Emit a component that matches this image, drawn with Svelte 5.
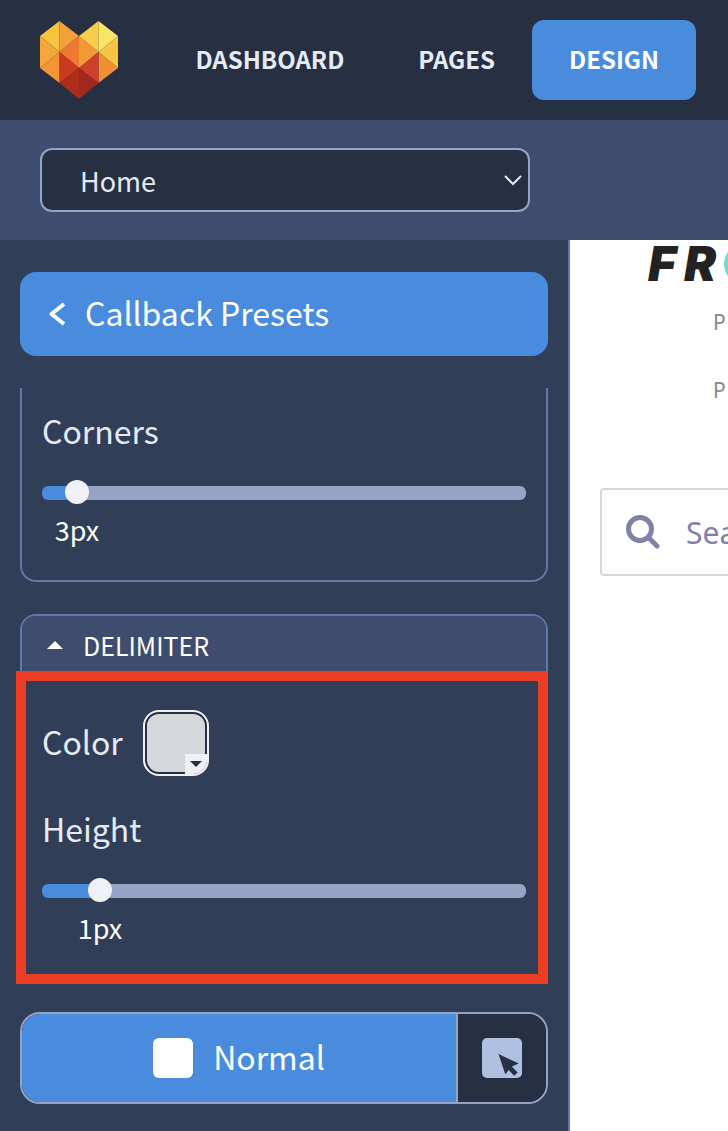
<script>
  let page = $state('Home');
  let color = $state('#d4d8db');
  let corners = $state(3);
  let height = $state(1);
  let mode = $state('normal');
</script>

{#snippet arrowCursor()}
  <svg class="state-icon" viewBox="0 0 40 40" aria-hidden="true">
    <rect width="40" height="40" rx="5" fill="#afc0e0" />
    <path d="M16.5 16 L36.8 25.5 L29.8 28.6 L35.6 34.4 L32.2 37.8 L26.6 32 L23.4 36.4 Z" fill="#272f42" />
  </svg>
{/snippet}

<div class="app">
  <header class="topbar">
    <a class="logo" href="#home" aria-label="Home">
      <svg viewBox="0 0 78 78" aria-hidden="true">
        <path d="M0 15 L19.5 0 V31 Z" fill="#f7c440" />
        <path d="M19.5 0 L39 15 L19.5 31 Z" fill="#f2a03a" />
        <path d="M0 15 L19.5 31 L0 47 Z" fill="#f3a83c" />
        <path d="M0 47 L19.5 31 V62 Z" fill="#f19535" />
        <path d="M39 15 L19.5 31 L39 47 Z" fill="#ee7a31" />
        <path d="M39 15 L58.5 31 L39 47 Z" fill="#f29937" />
        <path d="M39 15 L58.5 0 V31 Z" fill="#f8cd4c" />
        <path d="M58.5 0 L78 15 L58.5 31 Z" fill="#fbe564" />
        <path d="M78 15 L58.5 31 L78 47 Z" fill="#f6c543" />
        <path d="M78 47 L58.5 31 V62 Z" fill="#f18f34" />
        <path d="M19.5 31 L39 47 L19.5 62 Z" fill="#ca3c20" />
        <path d="M58.5 31 L39 47 L58.5 62 Z" fill="#d03f2c" />
        <path d="M39 47 L19.5 62 L39 78 Z" fill="#ad2d19" />
        <path d="M39 47 L58.5 62 L39 78 Z" fill="#a0281c" />
      </svg>
    </a>
    <nav aria-label="Main">
      <a href="#dashboard">DASHBOARD</a>
      <a href="#pages">PAGES</a>
      <a href="#design" class="active" aria-current="page">DESIGN</a>
    </nav>
  </header>

  <div class="pagebar">
    <div class="select">
      <select bind:value={page} aria-label="Page">
        <option>Home</option>
      </select>
      <svg viewBox="0 0 18 12" aria-hidden="true">
        <path d="M1 2 L9 10 L17 2" fill="none" stroke="#e5ebf6" stroke-width="2" />
      </svg>
    </div>
  </div>

  <main>
    <aside>
      <button class="back" type="button">
        <svg viewBox="0 0 18 26" aria-hidden="true">
          <path d="M15 3 L2.5 13 L15 23" fill="none" stroke="#fff" stroke-width="4" stroke-linejoin="round" />
        </svg>
        <span class="caption">Callback Presets</span>
      </button>

      <section class="panel continued">
        <label class="title" for="corners">Corners</label>
        <input id="corners" type="range" min="0" max="60" bind:value={corners} style="--ratio: {corners / 60}" />
        <output for="corners" style="--ratio: {corners / 60}">{corners}px</output>
      </section>

      <section class="panel delimiter">
        <button class="accordion" type="button" aria-expanded="true">
          <svg viewBox="0 0 16 8" aria-hidden="true"><path d="M0 8 L8 0 L16 8 Z" fill="#fff" /></svg>
          <span>DELIMITER</span>
        </button>
        <div class="body">
          <div class="color-row">
            <label class="title" for="color">Color</label>
            <span class="swatch">
              <input id="color" type="color" bind:value={color} />
              <span class="corner">
                <svg viewBox="0 0 12 6" aria-hidden="true"><path d="M0 0 H12 L6 6 Z" fill="#272f42" /></svg>
              </span>
            </span>
          </div>
          <label class="title" for="height">Height</label>
          <input id="height" type="range" min="0" max="10" bind:value={height} style="--ratio: {height / 10}" />
          <output for="height" style="--ratio: {height / 10}">{height}px</output>
        </div>
        <div class="highlight"></div>
      </section>

      <div class="states">
        <button class="normal" type="button" aria-pressed={mode === 'normal'} onclick={() => (mode = 'normal')}>
          <span class="square"></span>
          <span class="caption">Normal</span>
        </button>
        <button class="hover" type="button" aria-label="Hover" aria-pressed={mode === 'hover'} onclick={() => (mode = 'hover')}>
          {@render arrowCursor()}
        </button>
      </div>
    </aside>

    <div class="canvas">
      <div class="brand"><span>F</span><span>R</span><i></i></div>
      <p>P</p>
      <p>P</p>
      <label class="search">
        <svg viewBox="0 0 34 34" aria-hidden="true">
          <circle cx="14" cy="14" r="11.5" fill="none" stroke="#7f82a6" stroke-width="5" />
          <path d="M23 23 L31 31" stroke="#7f82a6" stroke-width="5" stroke-linecap="round" />
        </svg>
        <input type="search" placeholder="Search" aria-label="Search" />
      </label>
    </div>
  </main>
</div>

<style>
  :global(body) {
    margin: 0;
    background: #303e58;
  }

  .app,
  .app * {
    box-sizing: border-box;
  }

  .app {
    display: flex;
    flex-direction: column;
    height: 100vh;
    overflow: hidden;
    font-family: "Noto Sans CJK SC", "Open Sans", sans-serif;
    color: #e5ebf6;
  }

  button,
  select,
  input {
    font: inherit;
    color: inherit;
    margin: 0;
  }

  button {
    border: 0;
    padding: 0;
    cursor: pointer;
  }

  svg {
    display: block;
    flex: none;
  }

  .topbar {
    flex: none;
    display: flex;
    align-items: center;
    justify-content: space-between;
    height: 120px;
    padding: 0 32px 0 40px;
    background: #272f42;
  }

  .logo svg {
    width: 78px;
    height: 78px;
  }

  nav {
    display: flex;
  }

  nav a {
    padding: 0 37px 2px;
    border-radius: 12px;
    font-size: 24px;
    font-weight: 700;
    line-height: 78px;
    color: #e5ebf6;
    text-decoration: none;
  }

  nav a.active {
    background: #498cdd;
    color: #fff;
  }

  .pagebar {
    flex: none;
    height: 120px;
    padding: 28px 40px;
    background: #3e4d6d;
  }

  .select {
    position: relative;
    max-width: 490px;
  }

  .select select {
    display: block;
    width: 100%;
    height: 64px;
    padding: 0 38px;
    border: 2px solid #95a3c4;
    border-radius: 12px;
    background: #272f42;
    font-size: 27px;
    appearance: none;
  }

  .select svg {
    position: absolute;
    right: 8px;
    top: 26px;
    width: 18px;
    height: 12px;
    pointer-events: none;
  }

  main {
    flex: 1;
    display: flex;
    min-height: 0;
  }

  aside {
    flex: none;
    display: flex;
    flex-direction: column;
    gap: 32px;
    width: 570px;
    padding: 32px 20px 0;
    border-right: 2px solid #6077a8;
    background: #303e58;
  }

  .back {
    flex: none;
    display: flex;
    align-items: center;
    gap: 18px;
    height: 84px;
    padding: 0 29px;
    border-radius: 16px;
    background: #498cdd;
    color: #fff;
    font-size: 32px;
  }

  .back svg {
    width: 18px;
    height: 26px;
  }

  .caption {
    padding-bottom: 4px;
  }

  .panel {
    flex: none;
    position: relative;
    border: 2px solid #6077a8;
    border-radius: 16px;
  }

  .continued {
    padding: 20px 20px 28px;
    border-top: 0;
    border-radius: 0 0 16px 16px;
  }

  .title {
    display: block;
    padding-bottom: 4px;
    font-size: 32px;
    line-height: 44px;
  }

  input[type="range"] {
    display: block;
    width: 100%;
    height: 26px;
    margin-top: 24px;
    background: transparent;
    appearance: none;
  }

  input[type="range"]::-webkit-slider-runnable-track {
    height: 14px;
    border-radius: 6px;
    background: linear-gradient(#498cdd, #498cdd) 0 0 / calc((100% - 24px) * var(--ratio) + 12px) 100% no-repeat #95a3c4;
  }

  input[type="range"]::-webkit-slider-thumb {
    appearance: none;
    width: 24px;
    height: 24px;
    margin-top: -6px;
    border-radius: 50%;
    background: #f0f1f6;
  }

  output {
    display: block;
    width: 60px;
    margin-top: 4px;
    margin-left: calc((100% - 24px) * var(--ratio) - 18px);
    padding-bottom: 2px;
    font-size: 27px;
    line-height: 40px;
    text-align: center;
    color: #fff;
  }

  .accordion {
    display: flex;
    align-items: center;
    gap: 20px;
    width: 100%;
    height: 58px;
    padding: 0 25px;
    border-radius: 14px 14px 0 0;
    background: #3e4d6d;
    color: #fff;
    font-size: 25px;
  }

  .accordion svg {
    width: 16px;
    height: 8px;
  }

  .body {
    padding: 36px 20px 28px;
  }

  .color-row {
    display: flex;
    align-items: center;
    gap: 20px;
    margin-bottom: 30px;
  }

  .swatch {
    position: relative;
    width: 66px;
    height: 66px;
    overflow: hidden;
    border: 2px solid #f0f1f6;
    border-radius: 16px;
    background: #272f42;
  }

  .swatch input {
    display: block;
    width: 100%;
    height: 100%;
    padding: 2px;
    border: 0;
    background: none;
    appearance: none;
  }

  .swatch input::-webkit-color-swatch-wrapper {
    padding: 0;
  }

  .swatch input::-webkit-color-swatch {
    border: 0;
    border-radius: 12px;
  }

  .corner {
    position: absolute;
    right: 0;
    bottom: 0;
    display: grid;
    place-items: center;
    width: 22px;
    height: 20px;
    background: #f0f1f6;
    pointer-events: none;
  }

  .corner svg {
    width: 12px;
    height: 6px;
  }

  .highlight {
    position: absolute;
    inset: 55px -2px -6px -6px;
    border: 10px solid #eb3f25;
    pointer-events: none;
  }

  .states {
    flex: none;
    display: flex;
    height: 92px;
    overflow: hidden;
    border: 2px solid #95a3c4;
    border-radius: 20px;
    background: #272f42;
  }

  .normal {
    flex: 1;
    display: flex;
    align-items: center;
    justify-content: center;
    gap: 20px;
    background: #498cdd;
    color: #fff;
    font-size: 32px;
  }

  .square {
    width: 40px;
    height: 40px;
    border-radius: 6px;
    background: #fff;
  }

  .hover {
    display: grid;
    place-items: center;
    width: 90px;
    border-left: 2px solid #95a3c4;
    background: #272f42;
  }

  .state-icon {
    width: 40px;
    height: 40px;
  }

  .canvas {
    flex: 1;
    min-width: 0;
    overflow-x: clip;
    padding-left: 30px;
    background: #fff;
    font-family: "Noto Sans", sans-serif;
  }

  .brand {
    display: flex;
    align-items: center;
    gap: 8px;
    height: 48px;
    padding-left: 48px;
    font: italic 900 48px/48px Inter, sans-serif;
    color: #222;
  }

  .brand i {
    flex: none;
    width: 40px;
    height: 40px;
    border-radius: 50%;
    background: #6fdcc8;
  }

  .canvas p {
    margin: 0;
    padding-left: 113px;
    font-size: 21px;
    line-height: 68px;
    color: #888;
  }

  .search {
    display: flex;
    align-items: center;
    gap: 26px;
    width: 600px;
    height: 88px;
    margin-top: 64px;
    padding: 0 24px;
    border: 2px solid #d4d8db;
    border-radius: 4px;
  }

  .search svg {
    width: 34px;
    height: 34px;
  }

  .search input {
    flex: 1;
    min-width: 0;
    padding: 0;
    border: 0;
    background: none;
    font-size: 30px;
  }

  .search input::placeholder {
    color: #7f82a6;
    opacity: 1;
  }
</style>
